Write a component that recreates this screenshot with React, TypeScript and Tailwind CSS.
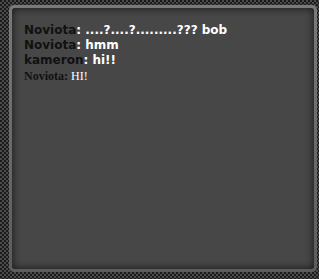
const lines = [
  { name: 'Noviota', text: ': ....?....?.........??? bob' },
  { name: 'Noviota', text: ': hmm' },
  { name: 'kameron', text: ': hi!!' },
];

export default function App() {
  return (
    <div className="w-[319px] h-[279px] pt-[5px] pl-[9px] pr-[2px] pb-[7px] bg-[repeating-conic-gradient(#4b4b4b_0%_25%,#1b1b1b_0%_50%)] [background-size:4px_4px]">
      <div className="h-full p-[3px] rounded-[5px] bg-[linear-gradient(#7a7a7a,#5c5c5c)]">
        <div className="h-full rounded-[3px] bg-[#474747] shadow-[inset_0_0_9px_rgba(0,0,0,0.7)] pl-[12px] pt-[15px] text-white">
          {lines.map((l, i) => (
            <div key={i} className="font-['DejaVu_Sans',sans-serif] font-bold text-[12px] leading-[15px] whitespace-nowrap">
              <span className="text-[#111]">{l.name}</span>
              {l.text}
            </div>
          ))}
          <div className="font-['Liberation_Serif',serif] text-[12px] leading-[15px] mt-[1px]">
            <span className="font-bold text-[#111]">Noviota:</span> HI!
          </div>
        </div>
      </div>
    </div>
  );
}
